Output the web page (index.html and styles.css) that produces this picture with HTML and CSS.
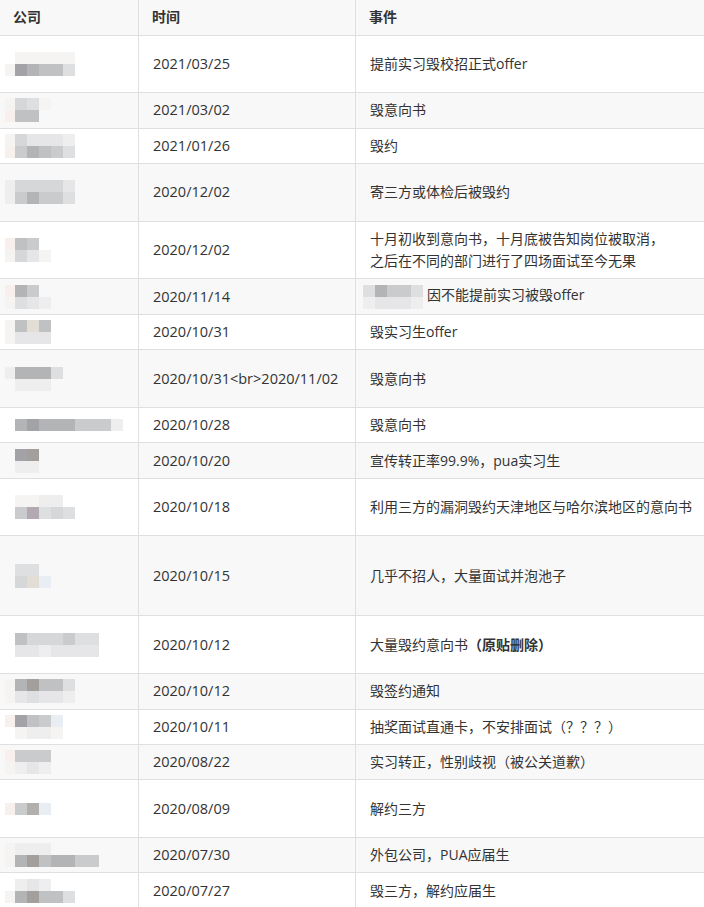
FILE: index.html
```html
<!DOCTYPE html>
<html lang="zh-CN">
<head>
<meta charset="utf-8">
<title>毁约名单</title>
<link rel="stylesheet" href="styles.css">
</head>
<body>
<table class="list">
  <colgroup>
    <col class="c-co">
    <col class="c-time">
    <col class="c-ev">
  </colgroup>
  <thead>
    <tr class="head"><th>公司</th><th>时间</th><th>事件</th></tr>
  </thead>
  <tbody>
    <tr class="r2">
      <td class="co"><div class="mz"><div class="mr"><i class="ld"></i><i class="k"></i><i class="k"></i><i class="k"></i><i class="k"></i><i class="k"></i></div><div class="mr"><i class="ld k"></i><i class="a"></i><i class="b"></i><i class="c"></i><i class="c"></i><i class="f"></i></div></div></td>
      <td class="tm">2021/03/25</td><td class="ev">提前实习毁校招正式offer</td>
    </tr>
    <tr class="r1 alt">
      <td class="co"><div class="mz"><div class="mr"><i class="ld k"></i><i class="e"></i><i class="f"></i><i class="k"></i></div><div class="mr"><i class="ld pk"></i><i class="c"></i><i class="c"></i></div></div></td>
      <td class="tm">2021/03/02</td><td class="ev">毁意向书</td>
    </tr>
    <tr class="r1">
      <td class="co"><div class="mz"><div class="mr"><i class="ld k"></i><i class="e"></i><i class="g"></i><i class="g"></i><i class="g"></i><i class="h"></i></div><div class="mr"><i class="ld pk"></i><i class="d"></i><i class="b"></i><i class="c"></i><i class="d"></i><i class="f"></i></div></div></td>
      <td class="tm">2021/01/26</td><td class="ev">毁约</td>
    </tr>
    <tr class="r2 alt">
      <td class="co"><div class="mz"><div class="mr"><i class="ld h"></i><i class="e"></i><i class="e"></i><i class="e"></i><i class="e"></i><i class="g"></i></div><div class="mr"><i class="ld h"></i><i class="d"></i><i class="b"></i><i class="d"></i><i class="d"></i><i class="f"></i></div></div></td>
      <td class="tm">2020/12/02</td><td class="ev">寄三方或体检后被毁约</td>
    </tr>
    <tr class="r2">
      <td class="co"><div class="mz"><div class="mr"><i class="ld pk"></i><i class="c"></i><i class="d"></i></div><div class="mr"><i class="ld k"></i><i class="e"></i><i class="g"></i><i class="k"></i></div></div></td>
      <td class="tm">2020/12/02</td><td class="ev">十月初收到意向书，十月底被告知岗位被取消，<br>之后在不同的部门进行了四场面试至今无果</td>
    </tr>
    <tr class="r1 alt">
      <td class="co"><div class="mz"><div class="mr"><i class="ld pk"></i><i class="b"></i><i class="d"></i></div><div class="mr"><i class="ld k"></i><i class="f"></i><i class="g"></i><i class="h"></i></div></div></td>
      <td class="tm">2020/11/14</td><td class="ev"><span class="mz inl"><span class="mr"><i class="f"></i><i class="b"></i><i class="d"></i><i class="d"></i><i class="f"></i></span><span class="mr"><i class="h"></i><i class="g"></i><i class="g"></i><i class="g"></i><i class="h"></i></span></span>因不能提前实习被毁offer</td>
    </tr>
    <tr class="r1">
      <td class="co"><div class="mz"><div class="mr"><i class="ld k"></i><i class="c"></i><i class="t"></i><i class="c"></i></div><div class="mr"><i class="ld k"></i><i class="g"></i><i class="g"></i><i class="g"></i></div></div></td>
      <td class="tm">2020/10/31</td><td class="ev">毁实习生offer</td>
    </tr>
    <tr class="r2 alt">
      <td class="co"><div class="mz"><div class="mr"><i class="ld h"></i><i class="b"></i><i class="b"></i><i class="b"></i><i class="f"></i></div><div class="mr"><i class="ld"></i><i class="h"></i><i class="h"></i><i class="h"></i></div></div></td>
      <td class="tm">2020/10/31&lt;br&gt;2020/11/02</td><td class="ev">毁意向书</td>
    </tr>
    <tr class="r1">
      <td class="co"><div class="mz"><div class="mr"><i class="ld"></i><i class="b"></i><i class="a"></i><i class="b"></i><i class="b"></i><i class="b"></i><i class="d"></i><i class="d"></i><i class="d"></i><i class="h"></i></div></div></td>
      <td class="tm">2020/10/28</td><td class="ev">毁意向书</td>
    </tr>
    <tr class="r1 alt">
      <td class="co"><div class="mz"><div class="mr"><i class="ld"></i><i class="a"></i><i class="a2"></i></div><div class="mr"><i class="ld"></i><i class="h"></i><i class="h"></i></div></div></td>
      <td class="tm">2020/10/20</td><td class="ev">宣传转正率99.9%，pua实习生</td>
    </tr>
    <tr class="r2">
      <td class="co"><div class="mz"><div class="mr"><i class="ld"></i><i class="k"></i><i class="k"></i><i class="h"></i><i class="h"></i></div><div class="mr"><i class="ld"></i><i class="d"></i><i class="p"></i><i class="f"></i><i class="e"></i><i class="f"></i></div></div></td>
      <td class="tm">2020/10/18</td><td class="ev">利用三方的漏洞毁约天津地区与哈尔滨地区的意向书</td>
    </tr>
    <tr class="r3 alt">
      <td class="co"><div class="mz"><div class="mr"><i class="ld"></i><i class="f"></i><i class="f"></i></div><div class="mr"><i class="ld"></i><i class="e"></i><i class="t"></i><i class="bl"></i></div></div></td>
      <td class="tm">2020/10/15</td><td class="ev">几乎不招人，大量面试并泡池子</td>
    </tr>
    <tr class="r2">
      <td class="co"><div class="mz"><div class="mr"><i class="ld"></i><i class="c"></i><i class="e"></i><i class="e"></i><i class="e"></i><i class="d"></i><i class="f"></i><i class="f"></i></div><div class="mr"><i class="ld"></i><i class="g"></i><i class="g"></i><i class="h"></i><i class="g"></i><i class="g"></i><i class="g"></i><i class="g"></i></div></div></td>
      <td class="tm">2020/10/12</td><td class="ev">大量毁约意向书<b>（原贴删除）</b></td>
    </tr>
    <tr class="r1 alt">
      <td class="co"><div class="mz"><div class="mr"><i class="ld k"></i><i class="b"></i><i class="a2"></i><i class="c"></i><i class="c"></i><i class="f"></i></div><div class="mr"><i class="ld k"></i><i class="g"></i><i class="f"></i><i class="g"></i><i class="g"></i><i class="h"></i></div></div></td>
      <td class="tm">2020/10/12</td><td class="ev">毁签约通知</td>
    </tr>
    <tr class="r1">
      <td class="co"><div class="mz"><div class="mr"><i class="ld pk"></i><i class="a"></i><i class="c"></i><i class="d"></i><i class="bl"></i></div><div class="mr"><i class="ld"></i><i class="k"></i><i class="h"></i><i class="h"></i><i class="k"></i></div></div></td>
      <td class="tm">2020/10/11</td><td class="ev">抽奖面试直通卡，不安排面试（？？？）</td>
    </tr>
    <tr class="r1 alt">
      <td class="co"><div class="mz"><div class="mr"><i class="ld pk"></i><i class="d"></i><i class="d"></i><i class="d"></i></div><div class="mr"><i class="ld k"></i><i class="h"></i><i class="g"></i><i class="h"></i></div></div></td>
      <td class="tm">2020/08/22</td><td class="ev">实习转正，性别歧视（被公关道歉）</td>
    </tr>
    <tr class="r2">
      <td class="co"><div class="mz"><div class="mr"><i class="ld pk"></i><i class="d"></i><i class="b2"></i><i class="bl"></i></div></div></td>
      <td class="tm">2020/08/09</td><td class="ev">解约三方</td>
    </tr>
    <tr class="r1 alt">
      <td class="co"><div class="mz"><div class="mr"><i class="ld k"></i><i class="h"></i><i class="h"></i><i class="h"></i></div><div class="mr"><i class="ld k"></i><i class="b"></i><i class="a2"></i><i class="c"></i><i class="b"></i><i class="b"></i><i class="d"></i><i class="d"></i></div></div></td>
      <td class="tm">2020/07/30</td><td class="ev">外包公司，PUA应届生</td>
    </tr>
    <tr class="r1">
      <td class="co"><div class="mz"><div class="mr"><i class="ld"></i><i class="h"></i><i class="g"></i><i class="h"></i></div><div class="mr"><i class="ld k"></i><i class="b"></i><i class="a2"></i><i class="c"></i><i class="c"></i><i class="f"></i></div></div></td>
      <td class="tm">2020/07/27</td><td class="ev">毁三方，解约应届生</td>
    </tr>
  </tbody>
</table>
</body>
</html>
```
FILE: styles.css
```css
html, body {
  margin: 0;
  padding: 0;
  background: #ffffff;
  overflow: hidden;
}

body {
  font-family: "Open Sans", "Noto Sans CJK SC", sans-serif;
  font-size: 14px;
  color: #333333;
}

.list {
  width: 704px;
  table-layout: fixed;
  border-collapse: separate;
  border-spacing: 0;
}

.c-co { width: 139px; }
.c-time { width: 217px; }
.c-ev { width: 348px; }

.list th,
.list td {
  box-sizing: border-box;
  padding: 0 13px;
  border-bottom: 1px solid #dfdfdf;
  border-right: 1px solid #dfdfdf;
  vertical-align: middle;
  text-align: left;
  line-height: 22px;
  white-space: nowrap;
  overflow: hidden;
}

.list th:last-child,
.list td:last-child {
  border-right: none;
}

.list th {
  font-weight: 700;
  background: #f8f8f8;
}

.head { height: 35.6px; }
.r1 { height: 35.45px; }
.r2 { height: 57.65px; }
.r3 { height: 80px; }

.alt td { background: #f8f8f8; }

.list td.co { padding-left: 5px; }
.list td.tm { font-size: 14.5px; padding-left: 14px; }
.list td.ev { padding-left: 14px; }
.ev b { font-weight: 700; }

/* pixelated placeholders */
.mz {
  display: flex;
  flex-direction: column;
}
.mz.inl {
  display: inline-flex;
  vertical-align: middle;
  margin: 0 4px 0 -7px;
}
.mr { display: flex; }
.mr i {
  display: block;
  width: 12px;
  height: 12px;
}
.mr i.ld { width: 10px; }

.a  { background: #a3a3a7; }
.a2 { background: #a29f9c; }
.b  { background: #b3b4b5; }
.b2 { background: #b1b0ac; }
.c  { background: #bfc1c3; }
.d  { background: #cacbcd; }
.e  { background: #d6d7d9; }
.f  { background: #dedfe0; }
.g  { background: #e6e6e8; }
.h  { background: #eeeeee; }
.k  { background: #f5f4f2; }
.pk { background: #f7f0ed; }
.p  { background: #b3a9b3; }
.t  { background: #e2ded6; }
.bl { background: #e9eef4; }
```
